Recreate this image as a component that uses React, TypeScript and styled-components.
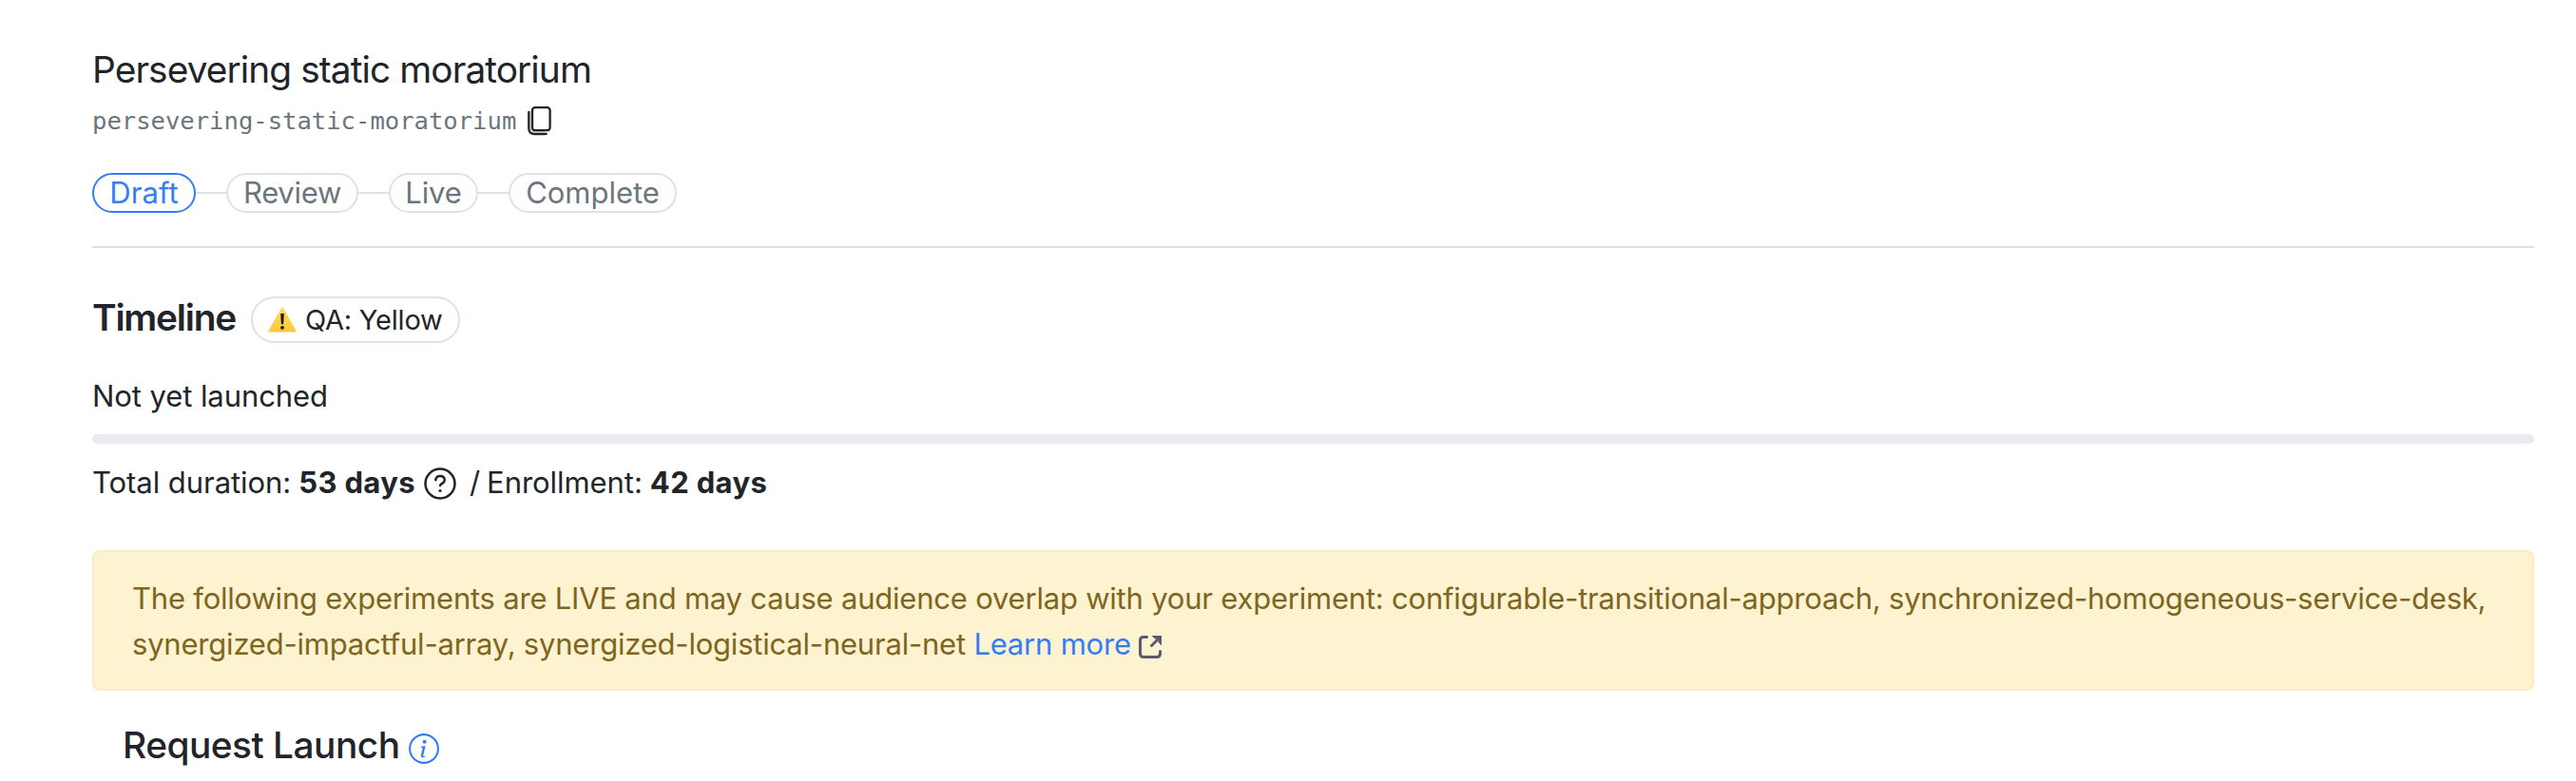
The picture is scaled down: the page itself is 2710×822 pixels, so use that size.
import React from "react";
import styled, { createGlobalStyle } from "styled-components";

const GlobalStyle = createGlobalStyle`
  *, *::before, *::after { box-sizing: border-box; }
  body {
    margin: 0;
    background: #fff;
    color: #212529;
    font-family: Inter, "Liberation Sans", sans-serif;
    font-size: 31px;
    line-height: 48px;
    -webkit-font-smoothing: antialiased;
  }
`;

const Page = styled.main`
  height: 822px;
  overflow: hidden;
  padding: 49px 44px 0 97px;
  white-space: nowrap;
`;

const Header = styled.header`
  height: 212px;
  border-bottom: 2px solid #dee2e6;
`;

const Heading = styled.h2<{ $weight: number; $spacing: number }>`
  margin: 0;
  font-size: 38.8px;
  line-height: 48px;
  font-weight: ${(p) => p.$weight};
  letter-spacing: ${(p) => p.$spacing}px;
`;

const SlugRow = styled.div`
  display: flex;
  align-items: center;
  gap: 11px;
  height: 48px;
  margin-top: 6px;
`;

const Slug = styled.code`
  font: 25.6px/48px "DejaVu Sans Mono", monospace;
  letter-spacing: -0.02px;
  color: #6c757d;
`;

const Steps = styled.ol`
  display: flex;
  width: 615px;
  margin: 31px 0 0;
  padding: 0;
  list-style: none;
`;

const Connector = styled.li`
  flex: 1;
  height: 2px;
  margin-top: 20px;
  background: #dee2e6;
`;

const Step = styled.li<{ $width: number; $spacing: number; $active?: boolean }>`
  width: ${(p) => p.$width}px;
  height: 42px;
  line-height: 42px;
  border: 2px solid ${(p) => (p.$active ? "#347df8" : "#dee2e6")};
  border-radius: 21px;
  color: ${(p) => (p.$active ? "#347df8" : "#6c757d")};
  letter-spacing: ${(p) => p.$spacing}px;
  display: flex;
  align-items: center;
  justify-content: center;
`;

const TimelineRow = styled.div`
  display: flex;
  align-items: flex-start;
  gap: 16px;
  height: 51px;
  margin-top: 49px;
`;

const QaPill = styled.span`
  display: flex;
  align-items: center;
  gap: 9px;
  width: 220px;
  height: 49px;
  margin-top: 2px;
  padding-left: 16px;
  border: 2px solid #dee2e6;
  border-radius: 25px;
  font-size: 29px;
  letter-spacing: -0.22px;
`;

const Status = styled.p`
  margin: 32px 0 0;
  letter-spacing: -0.08px;
`;

const Progress = styled.div`
  height: 10px;
  margin-top: 16px;
  border-radius: 5px;
  background: #e9ecef;
`;

const Durations = styled.div`
  display: flex;
  margin-top: 17px;
  height: 48px;
`;

const Label = styled.span`
  letter-spacing: -0.05px;
`;

const Value = styled.b`
  margin-left: 8px;
  letter-spacing: 0.35px;
`;

const HelpIcon = styled.svg`
  margin: 8px 14px 0 9px;
`;

const Slash = styled.span`
  margin-right: 7px;
`;

const Alert = styled.div`
  height: 148px;
  margin-top: 47px;
  padding: 25px 40px;
  border: 2px solid #fdecbf;
  border-radius: 8px;
  background: #fdf3d1;
  color: #7f6520;
  letter-spacing: -0.21px;
  white-space: normal;
`;

const Link = styled.a`
  color: #347df8;
  text-decoration: none;
`;

const ExternalIcon = styled.svg`
  margin-left: 8px;
  vertical-align: -4px;
`;

const LaunchRow = styled.div`
  display: flex;
  gap: 9px;
  margin-top: 33px;
  padding-left: 32px;
`;

const InfoIcon = styled.svg`
  margin-top: 12px;
`;

export default function App() {
  return (
    <Page>
      <GlobalStyle />
      <Header>
        <Heading $weight={400} $spacing={-0.9}>Persevering static moratorium</Heading>
        <SlugRow>
          <Slug>persevering-static-moratorium</Slug>
          <svg width="26" height="32" viewBox="0 0 26 32" fill="none">
            <path d="M5 6.5V23q0 4 4 4h10" stroke="#cfd1d3" strokeWidth="2.6" />
            <rect x="6" y="2.2" width="18.6" height="24" rx="3" fill="#fff" stroke="#212529" strokeWidth="2.3" />
            <path d="M2.8 6q-.5.8-.5 2v16q0 6 6 6h10.500q1.700 0 2.700-.6" stroke="#212529" strokeWidth="2.3" />
          </svg>
        </SlugRow>
        <Steps>
          <Step $width={109} $spacing={0.1} $active>Draft</Step>
          <Connector />
          <Step $width={139} $spacing={-0.28}>Review</Step>
          <Connector />
          <Step $width={94} $spacing={-0.1}>Live</Step>
          <Connector />
          <Step $width={177} $spacing={-0.04}>Complete</Step>
        </Steps>
      </Header>

      <TimelineRow>
        <Heading $weight={600} $spacing={-1.2}>Timeline</Heading>
        <QaPill>
          <svg width="30" height="27" viewBox="0 0 30 27">
            <defs>
              <linearGradient id="warn" x1="0" y1="0" x2="0" y2="1">
                <stop offset="0" stopColor="#fbdc62" />
                <stop offset="1" stopColor="#fbc83c" />
              </linearGradient>
            </defs>
            <path d="M15 .5q.8 0 1.300.9L29.500 25q.8 1.600-.9 1.600H1.400Q-.3 26.600.5 25L13.700 1.400Q14.200.5 15 .5z" fill="url(#warn)" />
            <path d="M13.200 7h3.600l-.7 11.200h-2.200z" fill="#1b1b12" />
            <circle cx="15" cy="21.800" r="1.900" fill="#1b1b12" />
          </svg>
          QA: Yellow
        </QaPill>
      </TimelineRow>

      <Status>Not yet launched</Status>
      <Progress />
      <Durations>
        <Label>Total duration:</Label>
        <Value>53 days</Value>
        <HelpIcon width="34" height="34" viewBox="0 0 34 34" fill="none" stroke="#212529">
          <circle cx="17" cy="17" r="15.500" strokeWidth="2.500" />
          <path d="M12.300 13.200Q12.900 9 17 9q4.700 0 4.700 4.300 0 2.200-2.400 3.500-2.300 1.200-2.300 2.200" strokeWidth="2.500" strokeLinecap="round" />
          <circle cx="17" cy="24.500" r="1.600" fill="#212529" stroke="none" />
        </HelpIcon>
        <Slash>/</Slash>
        <Label>Enrollment:</Label>
        <Value>42 days</Value>
      </Durations>

      <Alert>
        The following experiments are LIVE and may cause audience overlap with your experiment:
        configurable-transitional-approach, synchronized-homogeneous-service-desk,
        <br />
        synergized-impactful-array, synergized-logistical-neural-net <Link>Learn more</Link>
        <ExternalIcon width="24" height="24" viewBox="0 0 24 24" fill="none" stroke="#5b5b70" strokeWidth="3">
          <path d="M8.500 1.500H5Q1.500 1.500 1.500 5v14q0 3.500 3.500 3.500h14q3.500 0 3.500-3.500v-2.500" strokeLinecap="round" />
          <path d="M13.500 10.500 20 4" strokeLinecap="round" />
          <path d="M13.500 0H24v10.500L20.500 7V3.500H17z" fill="#5b5b70" stroke="none" />
        </ExternalIcon>
      </Alert>

      <LaunchRow>
        <Heading $weight={500} $spacing={-0.48}>Request Launch</Heading>
        <InfoIcon width="32" height="32" viewBox="0 0 32 32" fill="none" stroke="#347df8">
          <circle cx="16" cy="16" r="14.900" strokeWidth="2.100" />
          <circle cx="16.600" cy="8.800" r="2" fill="#347df8" stroke="none" />
          <path d="M12.800 13.700l4.800-.6-2.300 9.900q-.2 1.100.7.900l1.500-.5-.2.900q-1.200.9-2.600.9-2.300 0-1.800-2.300l1.600-7.100q.2-1-1.900-1.200z" fill="#347df8" stroke="none" />
        </InfoIcon>
      </LaunchRow>
    </Page>
  );
}
